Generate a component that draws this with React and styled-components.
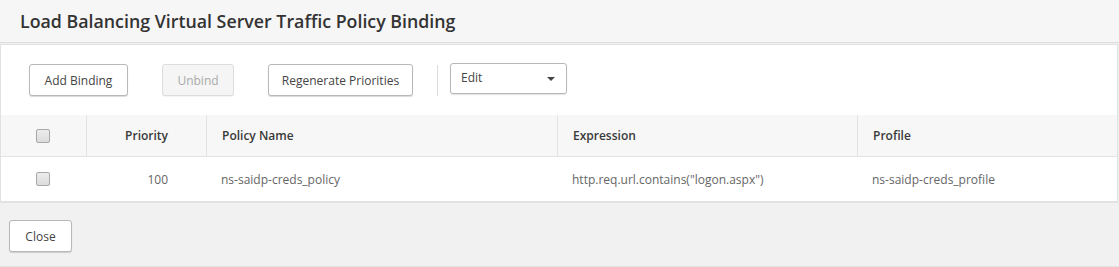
import styled, { createGlobalStyle } from "styled-components";

const Global = createGlobalStyle`
	body {
		margin: 0;
		background: #fff;
		font-family: "Open Sans", "Liberation Sans", sans-serif;
	}
`;

const Page = styled.div`
	width: 1119px;
	height: 267px;
	display: flex;
	flex-direction: column;
	background: #f1f1f1;
`;

const Title = styled.header`
	height: 43px;
	flex-shrink: 0;
	background: #f6f6f6;
	border-bottom: 1px solid #dedede;
	display: flex;
	align-items: center;
	padding-left: 20px;
	box-sizing: border-box;
	> h1 {
		margin: 0;
		font-size: 17.8px;
		font-weight: 600;
		color: #333;
	}
`;

const Panel = styled.section`
	margin-top: 1px;
	width: 1118px;
	background: #fff;
	border: 1px solid #e2e2e2;
	border-bottom: 2px solid #e2e2e2;
	box-sizing: border-box;
`;

const Toolbar = styled.div`
	height: 70px;
	display: flex;
	align-items: center;
	padding: 0 0 0 28px;
`;

const Button = styled.button`
	height: 32px;
	padding: 0;
	margin-right: ${(p) => p.$gap || 0}px;
	white-space: nowrap;
	font-family: inherit;
	font-size: 12px;
	color: ${(p) => (p.disabled ? "#aaa" : "#444")};
	background: ${(p) => (p.disabled ? "#f5f5f5" : "#fff")};
	border: 1px solid ${(p) => (p.disabled ? "#dcdcdc" : "#b8b8b8")};
	border-radius: 3px;
	box-shadow: 0 1px 1px ${(p) => (p.disabled ? "rgba(0,0,0,0.05)" : "rgba(0,0,0,0.15)")};
	width: ${(p) => p.$w}px;
	cursor: pointer;
`;

const Divider = styled.div`
	width: 1px;
	height: 31px;
	background: #dcdcdc;
	margin: 0 12px 0 24px;
`;

const Select = styled.div`
	width: 117px;
	height: 31px;
	margin-top: -3px;
	box-sizing: border-box;
	border: 1px solid #b8b8b8;
	border-radius: 3px;
	box-shadow: 0 1px 1px rgba(0, 0, 0, 0.12);
	display: flex;
	align-items: center;
	justify-content: space-between;
	padding: 0 11px 0 10px;
	font-size: 12px;
	color: #444;
	> span {
		margin-top: -3px;
	}
`;

const Caret = styled.i`
	width: 0;
	height: 0;
	border-left: 4px solid transparent;
	border-right: 4px solid transparent;
	border-top: 4px solid #444;
`;

const Table = styled.div`
	display: grid;
	grid-template-columns: 85px 120px 351px 300px 1fr;
	font-size: 12px;
`;

const Cell = styled.div`
	height: ${(p) => (p.$head ? 42 : 44)}px;
	display: flex;
	align-items: center;
	justify-content: ${(p) => (p.$align === "right" ? "flex-end" : p.$align === "center" ? "center" : "flex-start")};
	padding: ${(p) => (p.$align === "right" ? "0 38px 0 0" : p.$align === "center" ? "0" : "0 0 0 15px")};
	background: ${(p) => (p.$head ? "#f7f7f7" : "#fff")};
	color: ${(p) => (p.$head ? "#3a3a3a" : "#666")};
	font-weight: ${(p) => (p.$head ? 600 : 400)};
	border-bottom: ${(p) => (p.$head ? "1px solid #e3e3e3" : "none")};
	border-left: ${(p) => (p.$head && !p.$first ? "1px solid #e3e3e3" : "none")};
	box-sizing: border-box;
`;

const Check = styled.span`
	width: 12px;
	height: 12px;
	border: 1px solid #a8a8a8;
	border-radius: 2px;
	background: linear-gradient(#ececec, #dcdcdc);
	display: block;
	margin-left: -1px;
`;

const Footer = styled.footer`
	flex: 1;
	display: flex;
	align-items: flex-start;
	padding: 17px 0 0 9px;
	border-bottom: 1px solid #e2e2e2;
`;

const columns = ["Priority", "Policy Name", "Expression", "Profile"];
const rows = [
	{
		priority: 100,
		name: "ns-saidp-creds_policy",
		expression: 'http.req.url.contains("logon.aspx")',
		profile: "ns-saidp-creds_profile",
	},
];

export default function App() {
	return (
		<Page>
			<Global />
			<Title>
				<h1>Load Balancing Virtual Server Traffic Policy Binding</h1>
			</Title>
			<Panel>
				<Toolbar>
					<Button $w={99} $gap={34}>Add Binding</Button>
					<Button $w={72} $gap={34} disabled>Unbind</Button>
					<Button $w={145}>Regenerate Priorities</Button>
					<Divider />
					<Select>
						<span>Edit</span>
						<Caret />
					</Select>
				</Toolbar>
				<Table>
					<Cell $head $first $align="center"><Check /></Cell>
					{columns.map((c, i) => (
						<Cell $head key={c} $align={i === 0 ? "right" : "left"}>{c}</Cell>
					))}
					{rows.map((r) => (
						<>
							<Cell $align="center"><Check /></Cell>
							<Cell $align="right">{r.priority}</Cell>
							<Cell>{r.name}</Cell>
							<Cell>{r.expression}</Cell>
							<Cell>{r.profile}</Cell>
						</>
					))}
				</Table>
			</Panel>
			<Footer>
				<Button $w={63}>Close</Button>
			</Footer>
		</Page>
	);
}
